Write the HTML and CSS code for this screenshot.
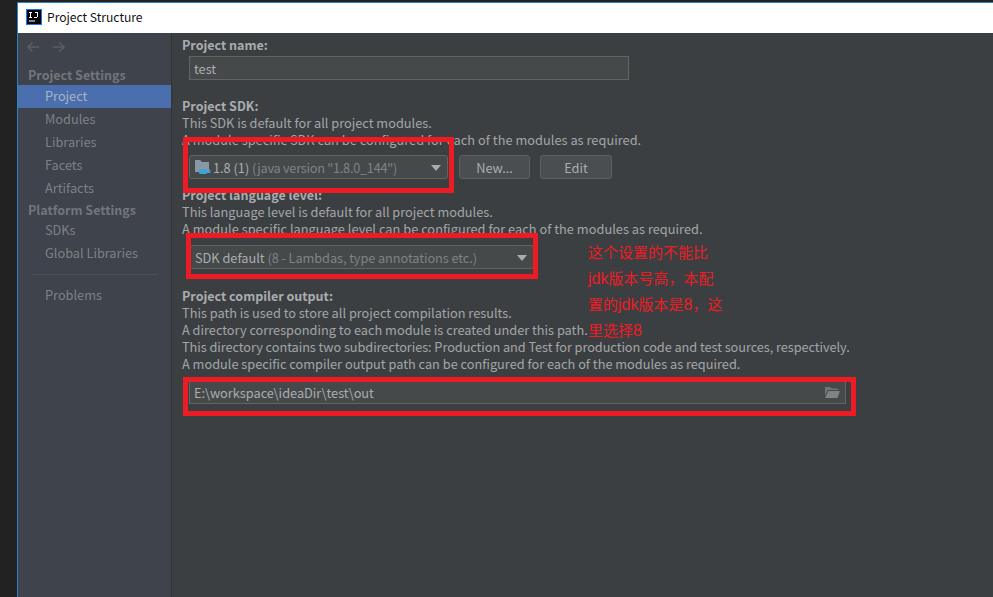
FILE: index.html
```html
<!DOCTYPE html>
<html lang="en">
<head>
<meta charset="utf-8">
<title>Project Structure</title>
<link rel="stylesheet" href="styles.css">
</head>
<body>
<div class="window">
  <header class="titlebar">
    <svg class="app-icon" width="16" height="16" viewBox="0 0 16 16"><rect width="16" height="16" fill="#087cfa"/><rect x="1" y="1" width="14" height="14" fill="#000"/><rect x="3" y="11.500" width="6" height="1" fill="#fff"/><rect x="3" y="3" width="3" height="1" fill="#fff"/><rect x="4" y="3" width="1" height="6" fill="#fff"/><rect x="3" y="8" width="3" height="1" fill="#fff"/><rect x="9" y="3" width="3" height="1" fill="#fff"/><rect x="11" y="3" width="1" height="5" fill="#fff"/><rect x="8" y="8" width="3" height="1" fill="#fff"/></svg>
    <span class="title">Project Structure</span>
  </header>
  <div class="body">
    <nav class="sidebar">
      <div class="arrows">
        <svg width="14" height="12" viewBox="0 0 14 12"><path d="M13 6H2M6.500 1.500 2 6l4.500 4.500" fill="none" stroke="#5b5f62" stroke-width="1.500"/></svg>
        <svg width="14" height="12" viewBox="0 0 14 12"><path d="M1 6h11M7.500 1.500 12 6l-4.500 4.500" fill="none" stroke="#5b5f62" stroke-width="1.500"/></svg>
      </div>
      <div class="nav-head first">Project Settings</div>
      <div class="nav-item active">Project</div>
      <div class="nav-item">Modules</div>
      <div class="nav-item">Libraries</div>
      <div class="nav-item">Facets</div>
      <div class="nav-item">Artifacts</div>
      <div class="nav-head">Platform Settings</div>
      <div class="nav-item">SDKs</div>
      <div class="nav-item">Global Libraries</div>
      <div class="nav-sep"></div>
      <div class="nav-item">Problems</div>
    </nav>
    <main class="content">
      <h2 class="label l-name">Project name:</h2>
      <div class="field name-field">test</div>
      <h2 class="label l-sdk">Project SDK:</h2>
      <p class="line">This SDK is default for all project modules.</p>
      <p class="line loose">A module specific SDK can be configured for each of the modules as required.</p>
      <div class="row sdk-row">
        <div class="combo sdk-combo">
          <svg class="jdk" width="17" height="16" viewBox="0 0 17 16"><path d="M1 1h5l2 2h7v10H1z" fill="#8a98a5"/><path d="M5 10h8v3.500A1.500 1.500 0 0 1 11.500 15h-5A1.500 1.500 0 0 1 5 13.500z" fill="#3fa3d6"/><path d="M13 11h3v2.500h-3" fill="none" stroke="#3fa3d6"/></svg>
          <span class="strong">1.8 (1)</span>&nbsp;<span class="dim sdk-dim">(java version "1.8.0_144")</span>
          <span class="caret"></span>
        </div>
        <button class="btn new-btn">New...</button>
        <button class="btn edit-btn">Edit</button>
      </div>
      <h2 class="label l-lang">Project language level:</h2>
      <p class="line">This language level is default for all project modules.</p>
      <p class="line loose">A module specific language level can be configured for each of the modules as required.</p>
      <div class="combo lang-combo">
        <span class="strong">SDK default</span>&nbsp;<span class="dim lang-dim">(8 - Lambdas, type annotations etc.)</span>
        <span class="caret"></span>
      </div>
      <h2 class="label l-out">Project compiler output:</h2>
      <p class="line">This path is used to store all project compilation results.</p>
      <p class="line">A directory corresponding to each module is created under this path.</p>
      <p class="line tight">This directory contains two subdirectories: Production and Test for production code and test sources, respectively.</p>
      <p class="line">A module specific compiler output path can be configured for each of the modules as required.</p>
      <div class="field out-field">
        <span class="out-path">E:\workspace\ideaDir\test\out</span>
        <svg class="open" width="15" height="13" viewBox="0 0 15 13"><path d="M0 1h5l1.500 1.500H13V4H3L0 10z" fill="#6e7478"/><path d="M3.500 5H15l-2.500 7H0z" fill="#7d8387"/></svg>
      </div>
    </main>
  </div>
  <div class="mark mark-sdk"></div>
  <div class="mark mark-lang"></div>
  <div class="mark mark-out"></div>
  <div class="note">这个设置的不能比<br><span class="latin">jdk</span>版本号高，本配<br>置的<span class="latin">jdk</span>版本是<span class="latin">8</span>，这<br>里选择<span class="latin">8</span></div>
</div>
</body>
</html>
```
FILE: styles.css
```css
* { box-sizing: border-box; }
html, body { margin: 0; height: 100%; }
body {
  background: #222;
  overflow: hidden;
  font-family: "Noto Sans CJK SC", "Noto Sans", sans-serif;
  font-size: 12.750px;
  color: #a9adb0;
}
.window {
  position: relative;
  margin: 2px 0 0 17px;
  height: 595px;
  border-top: 1px solid #2b84c8;
  border-left: 1px solid #2b84c8;
  display: flex;
  flex-direction: column;
}
.titlebar {
  height: 30px;
  flex: none;
  background: #fff;
  display: flex;
  align-items: center;
  padding: 0 0 2px 8px;
  gap: 5px;
  color: #111;
}
.title { font-size: 12.100px; margin-bottom: 1px; }
.body { flex: 1; display: flex; min-height: 0; }
.sidebar {
  width: 154px;
  flex: none;
  background: #3e434c;
  border-right: 1px solid #323232;
  color: #7d8184;
}
.arrows { height: 28px; padding: 8px 0 0 8px; display: flex; gap: 12px; }
.nav-head {
  height: 19px;
  line-height: 19px;
  padding-left: 10px;
  font-size: 12.500px;
  font-weight: 700;
  color: #72767a;
}
.nav-head.first { height: 20px; line-height: 20px; margin-top: 4px; }
.nav-item { height: 23px; line-height: 22px; padding-left: 27px; }
.nav-item.active { background: #4b6eaf; color: #a9b2bf; }
.nav-sep { height: 1px; background: #4b4f55; margin: 9px 13px 9px 13px; }
.content { flex: 1; background: #3c3f41; padding: 3px 0 0 10px; min-width: 0; }
.label { margin: 0; height: 17px; line-height: 17px; font-size: 12.500px; font-weight: 700; color: #a9adb0; }
.line { margin: 0; height: 17px; line-height: 17px; white-space: nowrap; color: #a2a6a8; }
.loose { letter-spacing: 0.035px; }
.tight { letter-spacing: -0.06px; }
.field {
  margin-left: 7px;
  height: 24px;
  line-height: 24px;
  background: #45494a;
  border: 1px solid #646464;
  padding-left: 4px;
  color: #a9adb0;
}
.name-field { width: 440px; margin-top: 3px; line-height: 23px; }
.l-sdk { margin-top: 17px; }
.row { display: flex; align-items: center; margin-left: 7px; margin-top: 7px; height: 24px; }
.combo {
  position: relative;
  height: 24px;
  line-height: 22px;
  background: #45494a;
  border: 1px solid #646464;
  border-radius: 3px;
  display: flex;
  align-items: center;
  padding: 1px 0 0 4px;
  white-space: nowrap;
}
.jdk { margin: -1px 2px 0 0; flex: none; }
.sdk-combo { width: 259px; }
.lang-combo { width: 344px; margin: 8px 0 0 8px; }
.strong { color: #a9adb0; }
.dim { color: #7f8385; }
.sdk-dim { letter-spacing: -0.27px; }
.lang-dim { letter-spacing: -0.08px; }
.caret {
  position: absolute;
  right: 6px;
  top: 9px;
  width: 0;
  height: 0;
  border-left: 5px solid transparent;
  border-right: 5px solid transparent;
  border-top: 6px solid #a9adb0;
}
.btn {
  height: 24px;
  background: #4a4e50;
  border: 1px solid #5e6060;
  border-radius: 3px;
  color: #a9adb0;
  font: inherit;
  padding: 0;
}
.new-btn { width: 71px; margin-left: 11px; }
.edit-btn { width: 72px; margin-left: 10px; }
.l-lang { margin-top: 8px; height: 16px; line-height: 16px; }
.l-out { margin-top: 18px; }
.out-field {
  width: 657px;
  margin-top: 8px;
  display: flex;
  align-items: center;
  justify-content: space-between;
  padding-right: 5px;
}
.out-path { padding-top: 1px; }
.mark { position: absolute; border: 5px solid #ed1c24; }
.mark-sdk { left: 165px; top: 134px; width: 271px; height: 56px; }
.mark-lang { left: 168px; top: 230px; width: 352px; height: 46px; }
.mark-out { left: 165px; top: 374px; width: 673px; height: 39px; }
.note {
  position: absolute;
  left: 570px;
  top: 236px;
  font-family: "Noto Sans CJK SC", "Liberation Sans", sans-serif;
  font-size: 15px;
  line-height: 26px;
  color: #ed1c24;
  white-space: nowrap;
}
.latin { font-family: "Liberation Sans", sans-serif; font-size: 16px; line-height: 1; }
```
